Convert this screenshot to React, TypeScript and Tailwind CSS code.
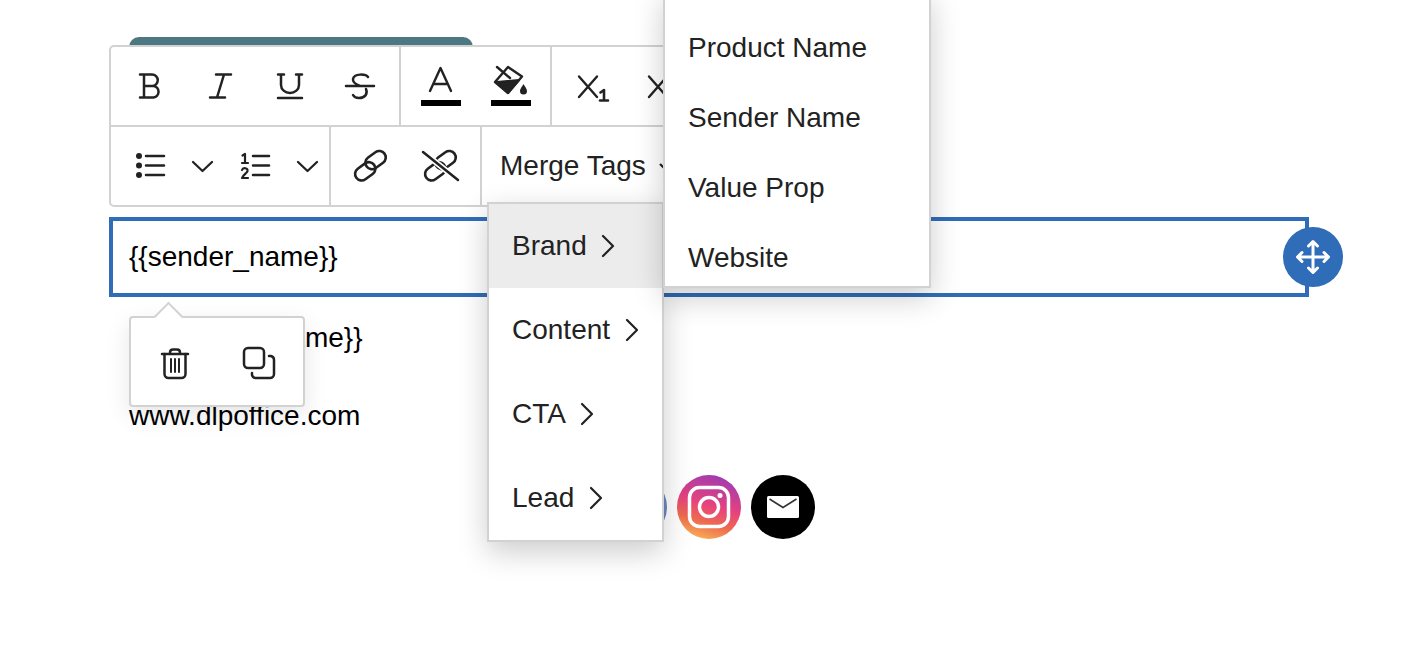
import React from "react";

const S = ({ children, w = 42 }: { children: React.ReactNode; w?: number }) => (
  <svg width={w} height={42} viewBox={`0 0 ${w} 42`} fill="none" stroke="#222" strokeWidth={2.5} strokeLinecap="round" strokeLinejoin="round" className="block shrink-0">
    {children}
  </svg>
);

const Btn = ({ children, w = "w-[70px]" }: { children: React.ReactNode; w?: string }) => (
  <div className={`${w} h-full flex items-center justify-center shrink-0`}>{children}</div>
);

const Chev = () => (
  <div className="w-[35px] h-full flex items-center justify-center shrink-0">
    <svg width={23} height={13} viewBox="0 0 23 13" fill="none" stroke="#222" strokeWidth={2.3} strokeLinecap="round" strokeLinejoin="round">
      <path d="M2 2L11.5 11L21 2" />
    </svg>
  </div>
);

const Right = () => (
  <svg width={14} height={24} viewBox="0 0 14 24" fill="none" stroke="#222" strokeWidth={2.2} strokeLinecap="round" strokeLinejoin="round" className="ml-[14.5px]">
    <path d="M2 2L12 12L2 22" />
  </svg>
);

const XIcon = () => (
  <S>
    <path d="M9 11.5L27 32M27 11.5L9 32" strokeWidth={2.4} />
    <path d="M30.5 27.5L34 25V35M30 35.5H38" strokeWidth={2.6} />
  </S>
);

const Chain = ({ broken }: { broken?: boolean }) => (
  <S>
    <g transform="rotate(-36 21 21) translate(0.5 0)" strokeWidth={2.6}>
      <rect x="2.5" y="16" width="22" height="13" rx="6.5" />
      <rect x="17.5" y="13" width="22" height="13" rx="6.5" />
    </g>
    {broken && <path d="M4 7L39 35" stroke="#fff" strokeWidth={6} strokeLinecap="butt" />}
    {broken && <path d="M4 7L39 35" />}
  </S>
);

const shadow = "shadow-[0_10px_28px_rgba(0,0,0,0.2)]";

export default function App() {
  return (
    <div className="relative w-[1416px] h-[658px] overflow-hidden bg-white font-['Liberation_Sans',Arial,sans-serif] text-[28px] text-black">
      {/* page content */}
      <div className="pl-[109px] w-[1309px] pt-[37px]">
        <div className="ml-[20px] w-[344px] h-[160px] mb-[20px] rounded-t-[10px] bg-[#4d7781]" />
        <div className="relative h-[80px] border-[4px] border-[#2f6db8] pl-[16px] flex items-center">
          <span>{"{{sender_name}}"}</span>
          <div className="absolute right-[-38px] top-[6px] w-[60px] h-[60px] rounded-full bg-[#2f6db8] flex items-center justify-center">
            <svg width={36} height={36} viewBox="-18 -18 36 36" fill="none" stroke="#fff" strokeWidth={3} strokeLinecap="round" strokeLinejoin="round">
              <path d="M0 -15V15M-15 0H15M-4.5 -11L0 -15.5L4.5 -11M-4.5 11L0 15.5L4.5 11M-11 -4.5L-15.5 0L-11 4.5M11 -4.5L15.5 0L11 4.5" />
            </svg>
          </div>
        </div>
        <div className="mt-[2px] pl-[20px] h-[78px] flex items-center">{"{{business_name}}"}</div>
        <div className="pl-[20px] h-[78px] flex items-center">www.dlpoffice.com</div>
        <div className="mt-[20px] flex justify-center gap-[10px]">
          <div className="w-[64px] h-[64px] rounded-full bg-[#6d86c2]" />
          <svg width={64} height={64} viewBox="0 0 64 64" className="block">
            <defs>
              <linearGradient id="ig" x1="0.3" y1="1" x2="0.6" y2="0">
                <stop offset="0" stopColor="#f9b256" />
                <stop offset="0.28" stopColor="#ee6a4f" />
                <stop offset="0.55" stopColor="#e6427e" />
                <stop offset="1" stopColor="#a13bb0" />
              </linearGradient>
            </defs>
            <circle cx="32" cy="32" r="32" fill="url(#ig)" />
            <rect x="12.5" y="12.5" width="39" height="39" rx="10" fill="none" stroke="#fff" strokeWidth={3.5} />
            <circle cx="32" cy="32" r="9.5" fill="none" stroke="#fff" strokeWidth={3.5} />
            <circle cx="43" cy="20.5" r="2.5" fill="#fff" />
          </svg>
          <svg width={64} height={64} viewBox="0 0 64 64" className="block">
            <circle cx="32" cy="32" r="32" fill="#000" />
            <rect x="16" y="21" width="32" height="22" rx="1.5" fill="#fff" />
            <path d="M18.5 24L32 32.5L45.5 24" fill="none" stroke="#333" strokeWidth={1.6} />
          </svg>
        </div>
      </div>

      {/* toolbar */}
      <div className="absolute left-[109px] top-[45px] w-[600px] h-[162px] border-2 border-[#d2d2d2] rounded-[5px] bg-white flex flex-col">
        <div className="h-[80px] border-b-2 border-[#d2d2d2] flex">
          <div className="w-[290px] pl-[4px] border-r-2 border-[#d2d2d2] flex shrink-0">
            <Btn>
              <S>
                <path d="M11 9.5H23a5.6 5.6 0 0 1 0 11.5H15M15 21H24.5a5.8 5.8 0 0 1 0 11.5H11M15 9.5V32.5" />
              </S>
            </Btn>
            <Btn>
              <S>
                <path d="M17 9.5H32M11 32.5H26M25 9.5L18 32.5" />
              </S>
            </Btn>
            <Btn>
              <S>
                <path d="M9 9.5H15M27 9.5H33M12 9.5V20a9 8 0 0 0 18 0V9.5M9 33H33" />
              </S>
            </Btn>
            <Btn>
              <S>
                <path d="M7 21H35M29 12C27 9 15 8 14 14C13.5 17 16 19 21 21M27 24C29 29 26 33 20 33C17 33 15 32 14 30" />
              </S>
            </Btn>
          </div>
          <div className="w-[151px] pl-[5px] border-r-2 border-[#d2d2d2] flex shrink-0">
            <Btn>
              <div className="relative w-[42px] h-[78px]">
                <svg width={42} height={78} viewBox="0 0 42 78" fill="none" stroke="#222" strokeWidth={2.4} strokeLinecap="round" strokeLinejoin="round" className="block">
                  <path d="M10 44L20.5 21L31 44M14 37H27" />
                </svg>
                <div className="absolute left-[0.5px] top-[53px] w-[40px] h-[6px] bg-black" />
              </div>
            </Btn>
            <Btn>
              <div className="relative w-[42px] h-[78px]">
                <svg width={42} height={78} viewBox="0 0 42 78" fill="none" className="block">
                  <path d="M18 20L32 29.5L18 46L5 35Z" fill="#fff" stroke="#222" strokeWidth={2.4} strokeLinejoin="round" />
                  <path d="M7 20L20 31" stroke="#222" strokeWidth={2.4} strokeLinecap="round" />
                  <path d="M7 35L29 33L18 46Z" fill="#222" stroke="#222" strokeWidth={2} strokeLinejoin="round" />
                  <path d="M33.5 37C31 41 30 42.5 30 44a3.5 3.5 0 0 0 7 0C37 42.5 36 41 33.5 37Z" fill="#222" />
                </svg>
                <div className="absolute left-[0.5px] top-[53px] w-[40px] h-[6px] bg-black" />
              </div>
            </Btn>
          </div>
          <div className="pl-[4px] flex">
            <Btn>
              <XIcon />
            </Btn>
            <Btn>
              <XIcon />
            </Btn>
          </div>
        </div>
        <div className="h-[78px] flex items-center">
          <div className="w-[220px] h-full pl-[4px] flex border-r-2 border-[#d2d2d2] shrink-0">
            <Btn>
              <S>
                <path d="M17 11H35M17 20.5H35M17 30H35" />
                <circle cx="10" cy="11" r="3" fill="#222" stroke="none" />
                <circle cx="10" cy="20.5" r="3" fill="#222" stroke="none" />
                <circle cx="10" cy="30" r="3" fill="#222" stroke="none" />
              </S>
            </Btn>
            <Chev />
            <Btn>
              <S>
                <path d="M19 11H35M19 20.5H35M19 30H35" />
                <path d="M8.5 10.5L11 9V18M8 18H14" strokeWidth={2.2} />
                <path d="M8 25C9 22 14 23 13.5 26C13 28 9 30 8 33H14" strokeWidth={2.2} />
              </S>
            </Btn>
            <Chev />
          </div>
          <div className="w-[151px] h-full pl-[4px] flex border-r-2 border-[#d2d2d2] shrink-0">
            <Btn>
              <Chain />
            </Btn>
            <Btn>
              <Chain broken />
            </Btn>
          </div>
          <div className="pl-[18px] flex items-center text-[#222] whitespace-nowrap">
            Merge Tags
            <svg width={20} height={12} viewBox="0 0 20 12" fill="none" stroke="#222" strokeWidth={2.2} className="ml-[12px] mt-[4px]">
              <path d="M2 2L10 10L18 2" />
            </svg>
          </div>
        </div>
      </div>

      {/* first-level menu */}
      <div className={`absolute left-[487px] top-[202px] w-[177px] border-2 border-[#d2d2d2] bg-white text-[#222] ${shadow}`}>
        <div className="h-[84px] pl-[23px] flex items-center bg-[#ececec]">
          Brand
          <Right />
        </div>
        <div className="h-[84px] pl-[23px] flex items-center">
          Content
          <Right />
        </div>
        <div className="h-[84px] pl-[23px] flex items-center">
          CTA
          <Right />
        </div>
        <div className="h-[84px] pl-[23px] flex items-center">
          Lead
          <Right />
        </div>
      </div>

      {/* second-level menu */}
      <div className={`absolute left-[663px] top-[-10px] w-[268px] h-[298px] border-2 border-[#d2d2d2] bg-white text-[#222] ${shadow}`}>
        <div className="pt-[21px]">
          {["Product Name", "Sender Name", "Value Prop", "Website"].map((t) => (
            <div key={t} className="h-[70px] pl-[23px] flex items-center">
              {t}
            </div>
          ))}
        </div>
      </div>

      {/* block popup */}
      <div className="absolute left-[129px] top-[316px] w-[176px] h-[91px] border-2 border-[#d2d2d2] rounded-[4px] bg-white flex items-center shadow-[0_8px_24px_rgba(0,0,0,0.1)]">
        <div className="absolute left-[27px] top-[-12px] w-[21px] h-[21px] rotate-45 bg-white border-l-2 border-t-2 border-[#d2d2d2]" />
        <div className="relative pl-[9px] flex">
          <Btn>
            <S>
              <path d="M8 13H34M16 13V11.5C16 9.5 17.5 8.5 19 8.5H23C24.5 8.5 26 9.5 26 11.5V13" />
              <path d="M10.5 13V33a4 4 0 0 0 4 4H27.5a4 4 0 0 0 4-4V13" />
              <path d="M17 18V31M21 18V31M25 18V31" strokeWidth={2} />
            </S>
          </Btn>
          <div className="w-[14px]" />
          <Btn>
            <S>
              <rect x="6" y="7" width="20" height="20" rx="4" />
              <path d="M31 15H33a4 4 0 0 1 3 4V33a4 4 0 0 1-4 4H18a4 4 0 0 1-4-3V32" />
            </S>
          </Btn>
        </div>
      </div>
    </div>
  );
}
